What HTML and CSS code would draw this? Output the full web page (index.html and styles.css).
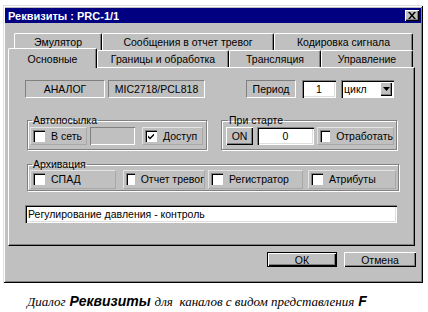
FILE: index.html
```html
<!DOCTYPE html>
<html lang="ru">
<head>
    <meta charset="UTF-8">
    <title>Реквизиты : PRC-1/1</title>
    <link rel="stylesheet" href="styles.css">
</head>
<body>
    <div class="dialog">
        <div class="titlebar">
            <span class="title">Реквизиты : PRC-1/1</span>
            <span class="close-btn">
                <svg width="8" height="7" viewBox="0 0 8 7"><path d="M0 0h2l2 2.5L6 0h2L5 3.5 8 7H6L4 4.5 2 7H0l3-3.5z" fill="#000"/></svg>
            </span>
        </div>

        <div class="tabs">
            <div class="tab-row back">
                <div class="tab" style="width: 88px">Эмулятор</div>
                <div class="tab" style="width: 172px">Сообщения в отчет тревог</div>
                <div class="tab" style="width: 139px">Кодировка сигнала</div>
            </div>
            <div class="tab-row front">
                <div class="tab active" style="width: 89px">Основные</div>
                <div class="tab" style="width: 132px">Границы и обработка</div>
                <div class="tab" style="width: 92px">Трансляция</div>
                <div class="tab" style="width: 92px">Управление</div>
            </div>
        </div>

        <div class="panel">
            <div class="row first-row">
                <div class="static analog">АНАЛОГ</div>
                <div class="static board">MIC2718/PCL818</div>
                <div class="spacer"></div>
                <div class="static period">Период</div>
                <div class="edit period-val">1</div>
                <div class="combo">
                    <span class="combo-text">цикл</span>
                    <span class="combo-btn"><svg width="7" height="4" viewBox="0 0 7 4"><path d="M0 0h7L3.5 4z" fill="#000"/></svg></span>
                </div>
            </div>

            <div class="row group-row">
                <fieldset class="group autosend">
                    <legend>Автопосылка</legend>
                    <div class="check-item net"><span class="checkbox"></span>В сеть</div>
                    <div class="edit sunken-empty"></div>
                    <div class="check-item access"><span class="checkbox checked"><svg width="8" height="8" viewBox="0 0 8 8"><path d="M1 3.5l2 2L7 1.5v2L3 7.5 1 5.5z" fill="#000"/></svg></span>Доступ</div>
                </fieldset>
                <fieldset class="group on-start">
                    <legend>При старте</legend>
                    <div class="button on-btn">ON</div>
                    <div class="edit start-val">0</div>
                    <div class="check-item work"><span class="checkbox"></span>Отработать</div>
                </fieldset>
            </div>

            <fieldset class="group archive">
                <legend>Архивация</legend>
                <div class="check-item spad"><span class="checkbox"></span>СПАД</div>
                <div class="check-item alarms"><span class="checkbox"></span>Отчет тревог</div>
                <div class="check-item recorder"><span class="checkbox"></span>Регистратор</div>
                <div class="check-item attrs"><span class="checkbox"></span>Атрибуты</div>
            </fieldset>

            <div class="edit comment">Регулирование давления - контроль</div>
        </div>

        <div class="buttons">
            <div class="button default">ОК</div>
            <div class="button cancel">Отмена</div>
        </div>
    </div>

    <p class="caption"><i class="serif">Диалог</i> <b>Реквизиты</b> <i class="serif">для &nbsp;каналов с видом представления</i> <b>F</b></p>
</body>
</html>
```

FILE: styles.css
```css
/* окно в стиле Windows 95 */
body {
    margin: 0;
    background-color: #fff;
    font-family: "Liberation Sans", Arial, sans-serif;
    font-size: 10.5px;
    color: #000;
    white-space: nowrap;
}
.dialog {
    margin: 5px 0 0 3px;
    width: 420px;
    height: 278px;
    box-sizing: border-box;
    padding: 3px 2px 0 2px;
    background-color: #c0c0c0;
    box-shadow: inset 1px 1px #dfdfdf, inset -1px -1px #000, inset 2px 2px #fff, inset -2px -2px #808080;
}
.titlebar {
    height: 15px;
    background-color: #000080;
    display: flex;
    align-items: center;
    justify-content: space-between;
    padding: 0 2px 0 3px;
}
.title {
    color: #fff;
    font-weight: bold;
    font-size: 11px;
}
.close-btn {
    width: 14px;
    height: 11px;
    background-color: #c0c0c0;
    box-shadow: inset 1px 1px #fff, inset -1px -1px #000, inset -2px -2px #808080;
    display: flex;
    align-items: center;
    justify-content: center;
}

/* вкладки */
.tabs {
    margin-top: 10px;
}
.tab-row {
    display: flex;
}
.tab-row.back {
    margin-left: 9px;
    height: 17px;
}
.tab-row.front {
    margin-left: 3px;
    height: 17px;
}
.tab {
    box-sizing: border-box;
    height: 100%;
    display: flex;
    align-items: center;
    justify-content: center;
    border-top: 1px solid #fff;
    border-left: 1px solid #fff;
    border-right: 1px solid #000;
    box-shadow: inset -1px 0 #808080;
    border-radius: 2px 2px 0 0;
    background-color: #c0c0c0;
}
.tab.active {
    position: relative;
    z-index: 1;
    height: 20px;
    margin-top: -2px;
    margin-bottom: -1px;
}

.panel {
    margin-left: 3px;
    width: 407px;
    height: 179px;
    box-sizing: border-box;
    border-top: 1px solid #fff;
    border-left: 1px solid #fff;
    border-right: 1px solid #000;
    border-bottom: 1px solid #000;
    box-shadow: inset -1px -1px #808080;
    padding: 12px 0 0 16px;
}
.row {
    display: flex;
}
.first-row {
    height: 18px;
    width: 369px;
}
.spacer {
    flex: 1;
}
.static {
    box-sizing: border-box;
    height: 18px;
    display: flex;
    align-items: center;
    justify-content: center;
    border-top: 1px solid #808080;
    border-left: 1px solid #808080;
    border-right: 1px solid #fff;
    border-bottom: 1px solid #fff;
}
.analog { width: 80px; }
.board { width: 97px; margin-left: 3px; }
.period { width: 50px; }
.edit {
    box-sizing: border-box;
    height: 18px;
    background-color: #fff;
    display: flex;
    align-items: center;
    padding: 0 3px;
    box-shadow: inset 1px 1px #808080, inset 2px 2px #000, inset -1px -1px #fff, inset -2px -2px #dfdfdf;
}
.period-val {
    width: 34px;
    margin-left: 6px;
    justify-content: center;
}
.combo {
    box-sizing: border-box;
    width: 53px;
    height: 18px;
    margin-left: 5px;
    background-color: #fff;
    display: flex;
    align-items: center;
    justify-content: space-between;
    padding: 2px;
    box-shadow: inset 1px 1px #808080, inset 2px 2px #000, inset -1px -1px #fff;
}
.combo-text {
    padding-left: 1px;
}
.combo-btn {
    width: 12px;
    height: 14px;
    background-color: #c0c0c0;
    display: flex;
    align-items: center;
    justify-content: center;
    box-shadow: inset 1px 1px #fff, inset -1px -1px #000, inset -2px -2px #808080;
}

/* группы */
.group {
    margin: 0;
    box-sizing: border-box;
    border: 1px solid #808080;
    box-shadow: inset 1px 1px #fff, 1px 1px #fff;
    display: flex;
    align-items: center;
    padding: 0 2px;
}
.group legend {
    padding: 0 1px;
    margin-left: 2px;
    line-height: 12px;
}
.group-row {
    margin-top: 16px;
    margin-left: 2px;
}
.autosend {
    width: 180px;
    height: 36px;
    padding-bottom: 3px;
}
.on-start {
    width: 175px;
    height: 36px;
    margin-left: 14px;
    padding-left: 4px;
    padding-bottom: 3px;
}
.archive {
    width: 370px;
    height: 33px;
    margin: 8px 0 0 2px;
    padding-bottom: 2px;
}
.check-item {
    box-sizing: border-box;
    height: 18px;
    display: flex;
    align-items: center;
    padding-left: 2px;
    border-top: 1px solid #e4e4e4;
    border-left: 1px solid #e4e4e4;
    border-right: 1px solid #a8a8a8;
    border-bottom: 1px solid #a8a8a8;
}
.checkbox {
    box-sizing: border-box;
    width: 12px;
    height: 12px;
    margin-right: 6px;
    background-color: #fff;
    box-shadow: inset 1px 1px #808080, inset 2px 2px #000, inset -1px -1px #fff;
    display: flex;
    align-items: center;
    justify-content: center;
}
.net { width: 57px; }
.sunken-empty {
    width: 45px;
    margin-left: 3px;
    background-color: #c0c0c0;
    box-shadow: inset 1px 1px #808080, inset -1px -1px #fff;
}
.access { width: 61px; margin-left: 7px; }
.on-btn {
    width: 27px;
    height: 18px;
}
.start-val {
    width: 57px;
    margin-left: 4px;
    justify-content: center;
}
.work { width: 77px; margin-left: 3px; }
.spad { width: 86px; height: 19px; }
.alarms { width: 82px; height: 19px; margin-left: 7px; }
.recorder { width: 95px; height: 19px; margin-left: 3px; }
.attrs { width: 88px; height: 19px; margin-left: 5px; }
.comment {
    width: 372px;
    margin-top: 14px;
    padding-left: 3px;
}

/* кнопки */
.button {
    box-sizing: border-box;
    display: flex;
    align-items: center;
    justify-content: center;
    background-color: #c0c0c0;
    box-shadow: inset 1px 1px #fff, inset -1px -1px #000, inset -2px -2px #808080;
}
.buttons {
    display: flex;
    justify-content: flex-end;
    margin-top: 6px;
    padding-right: 5px;
}
.buttons .button {
    height: 15px;
}
.default {
    width: 70px;
    border: 1px solid #000;
}
.cancel {
    width: 72px;
    margin-left: 7px;
}

.caption {
    margin: 10px 0 0 27px;
    font-size: 14px;
}
.caption .serif {
    font-family: "Liberation Serif", "Times New Roman", serif;
    font-size: 13px;
}
.caption b {
    font-style: italic;
}
```
